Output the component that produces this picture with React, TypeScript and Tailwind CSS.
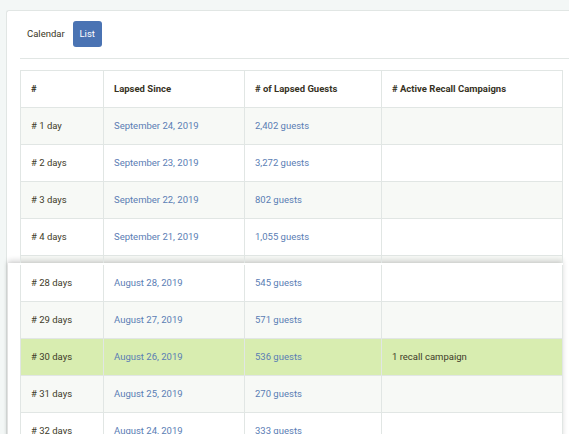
import React from "react"

type Row = {
	label: string
	since: string
	guests: string
	campaigns?: string
	tone: "white" | "stripe" | "green"
}

const topRows: Row[] = [
	{ label: "# 1 day", since: "September 24, 2019", guests: "2,402 guests", tone: "stripe" },
	{ label: "# 2 days", since: "September 23, 2019", guests: "3,272 guests", tone: "white" },
	{ label: "# 3 days", since: "September 22, 2019", guests: "802 guests", tone: "stripe" },
	{ label: "# 4 days", since: "September 21, 2019", guests: "1,055 guests", tone: "white" },
]

const bottomRows: Row[] = [
	{ label: "# 28 days", since: "August 28, 2019", guests: "545 guests", tone: "white" },
	{ label: "# 29 days", since: "August 27, 2019", guests: "571 guests", tone: "stripe" },
	{ label: "# 30 days", since: "August 26, 2019", guests: "536 guests", campaigns: "1 recall campaign", tone: "green" },
	{ label: "# 31 days", since: "August 25, 2019", guests: "270 guests", tone: "stripe" },
	{ label: "# 32 days", since: "August 24, 2019", guests: "333 guests", tone: "white" },
]

const toneBg = {
	white: "bg-white",
	stripe: "bg-[#f7f9f6]",
	green: "bg-[#d8edb0]",
}

const gridCols = "grid grid-cols-[83px_141px_137px_182px] w-[543px]"
const cell = "border-l border-[#e1e6e4] pl-[10px] flex items-center"

const TableRow = ({ row }: { row: Row }) => (
	<div className={`${gridCols} h-[37px] border-b border-[#e1e6e4] ${toneBg[row.tone]}`}>
		<div className={`${cell} text-[#403b29]`}>{row.label}</div>
		<div className={`${cell} text-[#5a7db4]`}>{row.since}</div>
		<div className={`${cell} text-[#5a7db4]`}>{row.guests}</div>
		<div className={`${cell} border-r text-[#403b29]`}>{row.campaigns}</div>
	</div>
)

export default function App() {
	return (
		<div
			className="h-[434px] overflow-hidden bg-[#f3f7f6] pl-[6px] pt-[10px] text-[9.5px]"
			style={{ fontFamily: "Roboto, 'Liberation Sans', sans-serif" }}
		>
			<div className="w-[620px] h-[440px] bg-white border-l border-t border-[#e1e6e4] rounded-tl-[3px]">
				{/* tabs */}
				<div className="flex items-center pl-[20px] pt-[10px]">
					<span className="text-[#3a3626] mr-[8px]">Calendar</span>
					<span className="h-[26px] w-[29px] flex items-center justify-center rounded-[3px] bg-[#4a73b3] text-white">
						List
					</span>
				</div>
				<div className="ml-[13px] mt-[11px] border-t border-[#e1e6e4]" />

				{/* table */}
				<div className="ml-[13px] mt-[11px]">
					<div className={`${gridCols} h-[38px] border-y border-[#e1e6e4] bg-white font-bold text-[#36321f]`}>
						<div className={cell}>#</div>
						<div className={cell}>Lapsed Since</div>
						<div className={cell}># of Lapsed Guests</div>
						<div className={`${cell} border-r`}># Active Recall Campaigns</div>
					</div>
					{topRows.map((r) => (
						<TableRow key={r.label} row={r} />
					))}
					<div className={`${gridCols} h-[7px] bg-[#f7f9f6]`}>
						<div className="border-l border-[#e1e6e4]" />
						<div className="border-l border-[#e1e6e4]" />
						<div className="border-l border-[#e1e6e4]" />
						<div className="border-x border-[#e1e6e4]" />
					</div>
				</div>

				{/* jumped-ahead section */}
				<div className="ml-[1px] w-[555px] pl-[12px] pt-[2px] bg-white shadow-[0_-3px_5px_rgba(0,0,0,0.14),-2px_0_3px_rgba(0,0,0,0.07)]">
					{bottomRows.map((r) => (
						<TableRow key={r.label} row={r} />
					))}
				</div>
			</div>
		</div>
	)
}
